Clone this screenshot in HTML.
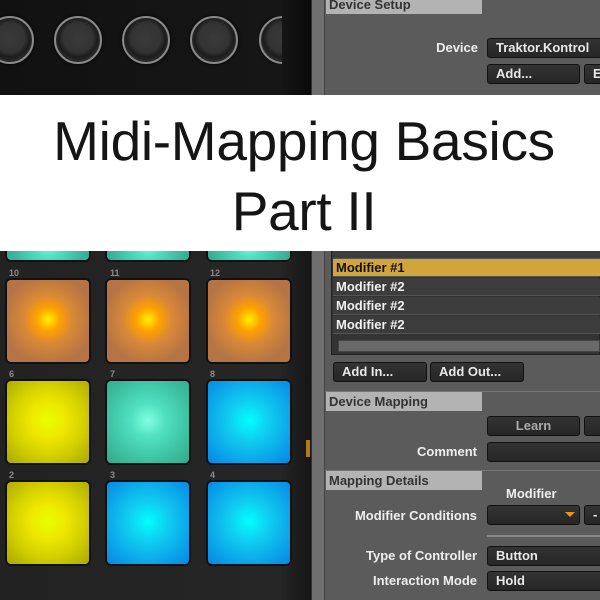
<!DOCTYPE html>
<html><head><style>
*{margin:0;padding:0;box-sizing:border-box}
body{width:600px;height:600px;overflow:hidden;position:relative;background:#1e1e1e;font-family:"Liberation Sans",Arial,sans-serif}
.a{position:absolute}
.left{left:0;top:0;width:311px;height:600px;background:linear-gradient(90deg,#222 0%,#262626 90%,#151515 100%)}
.top{left:0;top:0;width:311px;height:95px;background:linear-gradient(90deg,#111 0%,#161616 90%,#0a0a0a 100%)}
.strip{left:311px;top:0;width:14px;height:600px;background:#6f6f6f;border-right:1px solid #444;border-left:1px solid #333}
.right{left:325px;top:0;width:275px;height:600px;background:#5b5b5b}
.knob{width:48px;height:48px;border-radius:50%;background:radial-gradient(circle at 50% 45%,#3a3a3a 0,#333 45%,#1c1c1c 60%,#2a2a2a 70%,#111 78%);border:2px solid #8a8a8a;box-shadow:0 0 3px #000}
.pad{width:82px;height:82px;border-radius:4px;box-shadow:0 0 0 2px #111}
.or{background:radial-gradient(circle at 50% 48%,#ffef00 0,#ffa000 20%,#d88838 42%,#b67444 75%)}
.ye{background:radial-gradient(circle at 50% 48%,#e8ff00 0,#eee800 30%,#d4d000 60%,#a9a800 100%)}
.te{background:radial-gradient(circle at 50% 48%,#80ffe0 0,#50e0c0 30%,#3cc0a0 70%,#34a88c 100%)}
.bl{background:radial-gradient(circle at 50% 48%,#00ffff 0,#10ccf0 35%,#0a9ae8 80%,#0588e0 100%)}
.num{font-size:9px;color:#8a8a8a;font-weight:bold}
.hdr{background:#b3b3b3;color:#333;font-size:13px;font-weight:bold;padding-left:3px;line-height:19px;height:19px}
.btn{background:linear-gradient(#333,#262626);border:1px solid #111;border-radius:3px;color:#e8e8e8;font-size:13px;font-weight:bold;line-height:18px;padding-left:8px;height:20px}
.lbl{color:#eee;font-size:13px;font-weight:bold;text-align:right;width:200px}
.row{left:333px;width:267px;height:18px;background:#3c3c3c;color:#f0f0f0;font-size:13px;font-weight:bold;line-height:18px;padding-left:3px;border-bottom:1px solid #555}
.banner{left:0;top:95px;width:600px;height:156px;background:#fff;text-align:center;color:#151515;font-size:55px;line-height:70px;padding-top:11px;letter-spacing:-0.3px;padding-left:8px}
</style></head><body>
<div class="a left"></div>
<div class="a top"></div>
<div class="a strip"></div>
<div class="a right"></div>
<div class="a knob" style="left:-14px;top:16px"></div>
<div class="a knob" style="left:54px;top:16px"></div>
<div class="a knob" style="left:122px;top:16px"></div>
<div class="a knob" style="left:190px;top:16px"></div>
<div class="a knob" style="left:259px;top:16px;clip-path:inset(0 25px 0 0)"></div>

<div class="a pad te" style="left:7px;top:230px;height:30px"></div>
<div class="a pad te" style="left:107px;top:230px;height:30px"></div>
<div class="a pad te" style="left:208px;top:230px;height:30px"></div>
<div class="a num" style="left:9px;top:268px">10</div>
<div class="a num" style="left:110px;top:268px">11</div>
<div class="a num" style="left:210px;top:268px">12</div>
<div class="a pad or" style="left:7px;top:280px"></div>
<div class="a pad or" style="left:107px;top:280px"></div>
<div class="a pad or" style="left:208px;top:280px"></div>
<div class="a num" style="left:9px;top:369px">6</div>
<div class="a num" style="left:110px;top:369px">7</div>
<div class="a num" style="left:210px;top:369px">8</div>
<div class="a pad ye" style="left:7px;top:381px"></div>
<div class="a pad te" style="left:107px;top:381px"></div>
<div class="a pad bl" style="left:208px;top:381px"></div>
<div class="a num" style="left:9px;top:470px">2</div>
<div class="a num" style="left:110px;top:470px">3</div>
<div class="a num" style="left:210px;top:470px">4</div>
<div class="a pad ye" style="left:7px;top:482px"></div>
<div class="a pad bl" style="left:107px;top:482px"></div>
<div class="a pad bl" style="left:208px;top:482px"></div>
<div class="a" style="left:306px;top:440px;width:4px;height:17px;background:#b07820"></div>

<div class="a hdr" style="left:326px;top:-5px;width:156px">Device Setup</div>
<div class="a lbl" style="left:278px;top:40px">Device</div>
<div class="a btn" style="left:487px;top:38px;width:120px">Traktor.Kontrol</div>
<div class="a btn" style="left:487px;top:64px;width:93px">Add...</div>
<div class="a btn" style="left:584px;top:64px;width:30px">E</div>

<div class="a" style="left:331px;top:251px;width:269px;height:104px;background:#333;border:1px solid #222"></div>
<div class="a row" style="top:251px;height:8px"></div>
<div class="a row" style="top:259px;background:#d2a43c;color:#111">Modifier #1</div>
<div class="a row" style="top:278px">Modifier #2</div>
<div class="a row" style="top:297px">Modifier #2</div>
<div class="a row" style="top:316px">Modifier #2</div>
<div class="a" style="left:338px;top:340px;width:262px;height:12px;background:#6a6a6a;border:1px solid #444"></div>
<div class="a btn" style="left:333px;top:362px;width:94px">Add In...</div>
<div class="a btn" style="left:430px;top:362px;width:94px">Add Out...</div>

<div class="a" style="left:325px;top:391px;width:275px;height:1px;background:#777"></div>
<div class="a hdr" style="left:326px;top:392px;width:156px">Device Mapping</div>
<div class="a btn" style="left:487px;top:416px;width:93px;text-align:center;padding:0;color:#aaa">Learn</div>
<div class="a btn" style="left:584px;top:416px;width:30px"></div>
<div class="a lbl" style="left:277px;top:444px">Comment</div>
<div class="a btn" style="left:487px;top:442px;width:120px"></div>
<div class="a" style="left:325px;top:470px;width:275px;height:1px;background:#777"></div>
<div class="a hdr" style="left:326px;top:471px;width:156px">Mapping Details</div>
<div class="a" style="left:506px;top:486px;color:#eee;font-size:13px;font-weight:bold">Modifier</div>
<div class="a lbl" style="left:277px;top:508px">Modifier Conditions</div>
<div class="a btn" style="left:487px;top:505px;width:93px"></div>
<div class="a" style="left:565px;top:512px;width:0;height:0;border-left:5px solid transparent;border-right:5px solid transparent;border-top:5px solid #f09020"></div>
<div class="a btn" style="left:584px;top:505px;width:30px">-</div>
<div class="a" style="left:487px;top:535px;width:113px;height:2px;background:#888"></div>
<div class="a lbl" style="left:277px;top:548px">Type of Controller</div>
<div class="a btn" style="left:487px;top:546px;width:120px">Button</div>
<div class="a lbl" style="left:277px;top:573px">Interaction Mode</div>
<div class="a btn" style="left:487px;top:571px;width:120px">Hold</div>

<div class="a banner">Midi-Mapping Basics<br>Part II</div>
</body></html>
